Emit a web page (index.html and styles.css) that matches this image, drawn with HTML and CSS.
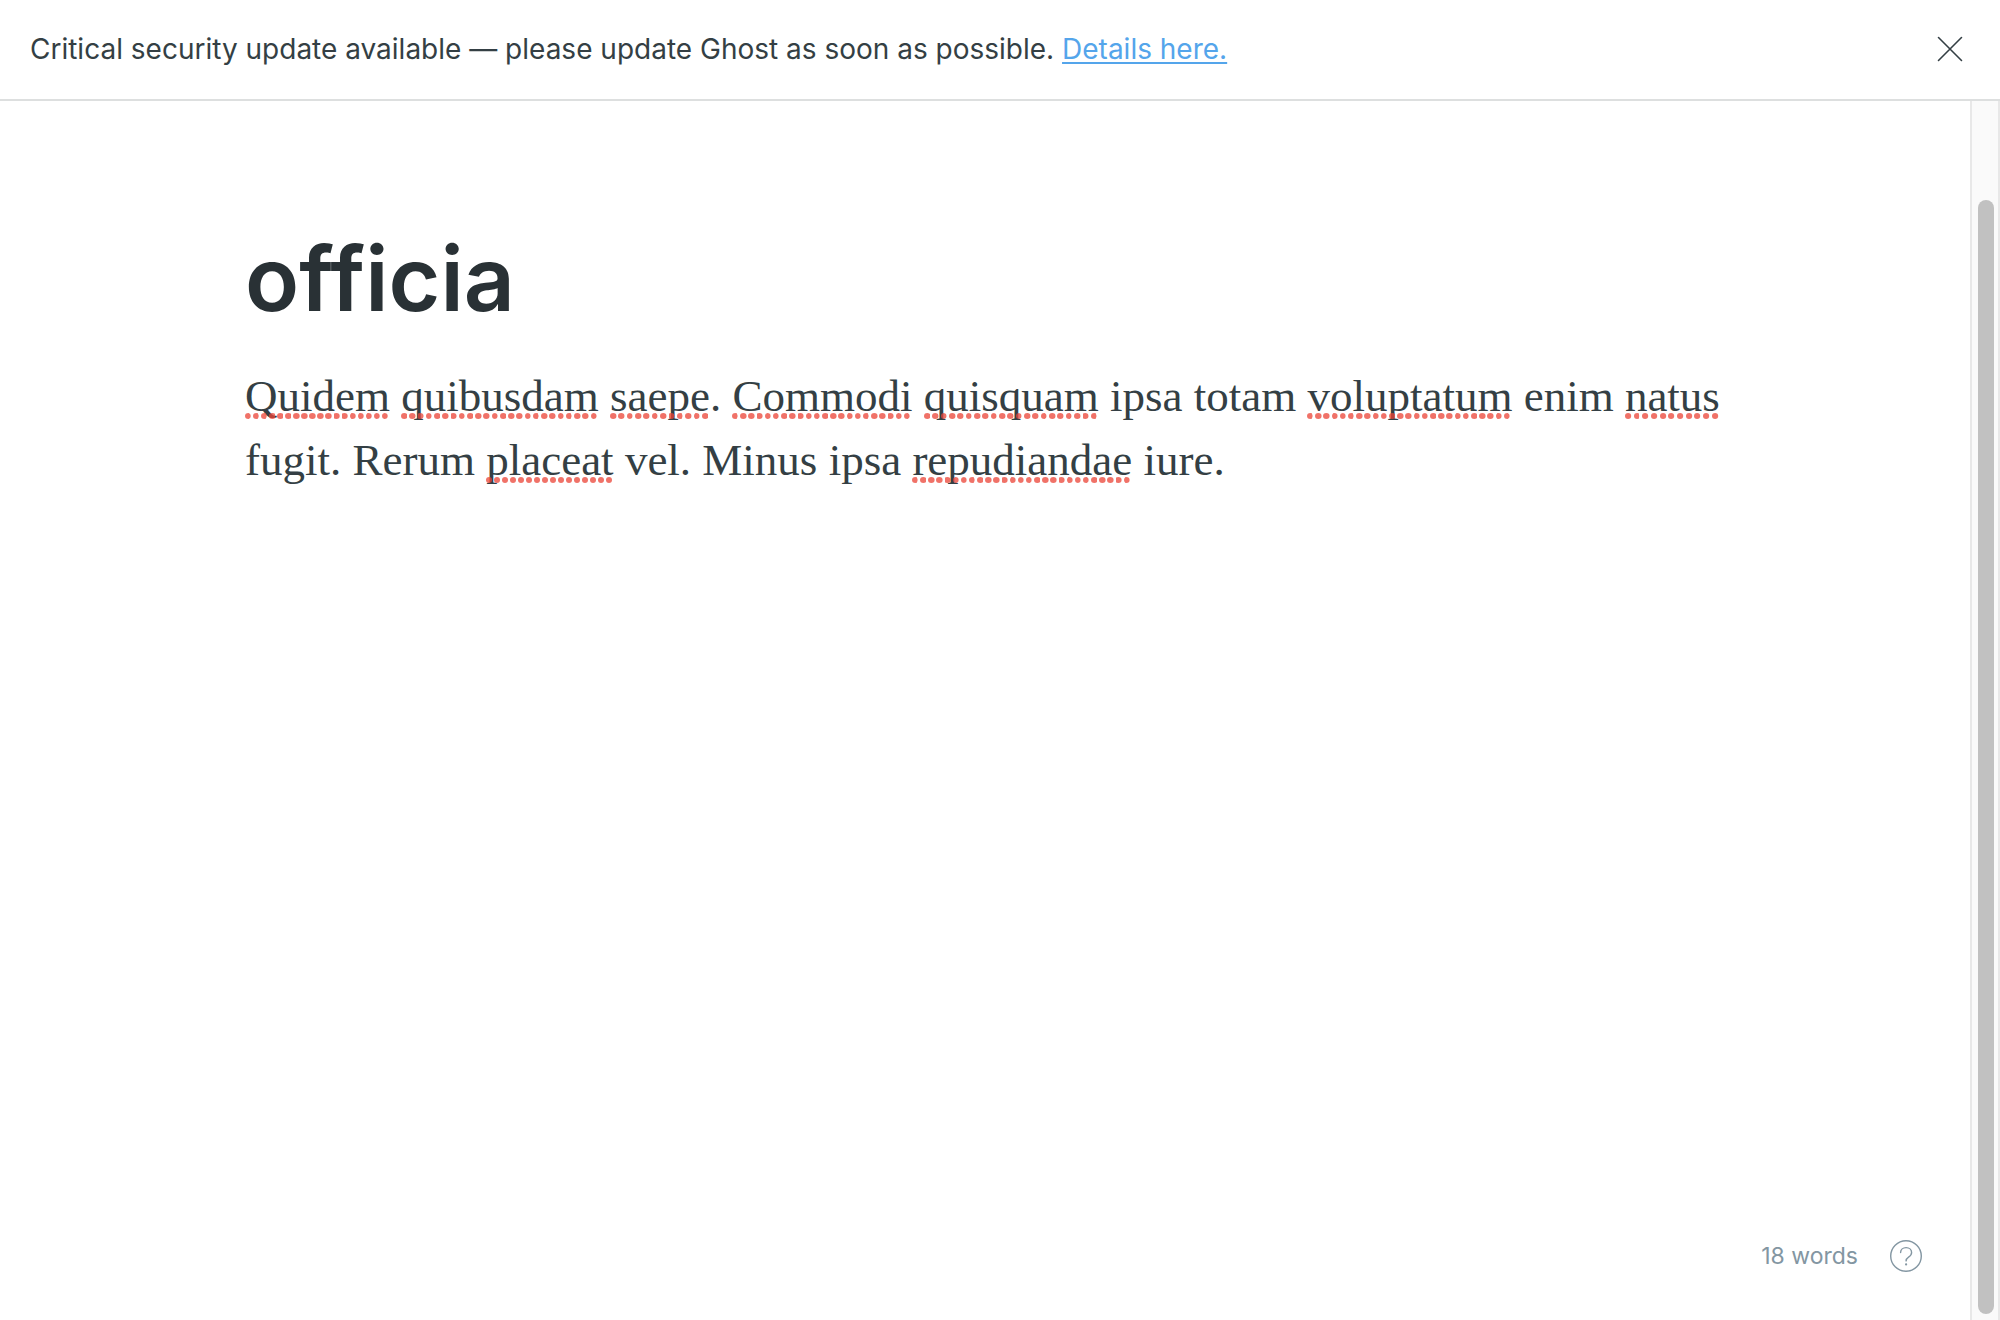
FILE: index.html
```html
<!DOCTYPE html>
<html lang="en">
<head>
<meta charset="utf-8">
<title>Ghost editor</title>
<link rel="stylesheet" href="styles.css">
</head>
<body>
<header class="alert">
  <p class="alert-text">Critical security update available — please update Ghost as soon as possible. <a class="alert-link" href="#details">Details here.</a></p>
  <button class="icon-button" type="button" aria-label="Close">
    <svg width="26" height="26" viewBox="0 0 26 26" fill="none" stroke="currentColor" stroke-width="1.6" stroke-linecap="round"><path d="M1.5 1.5l23 23M24.5 1.5l-23 23"/></svg>
  </button>
</header>
<div class="workspace">
  <main class="editor">
    <div class="content">
      <input class="title" type="text" value="officia" aria-label="Post title" spellcheck="false">
      <div class="body" role="textbox" aria-multiline="true" aria-label="Post content" contenteditable="true" spellcheck="false"><p class="paragraph"><span class="misspelled">Quidem</span> <span class="misspelled">quibusdam</span> <span class="misspelled">saepe</span>. <span class="misspelled">Commodi</span> <span class="misspelled">quisquam</span> ipsa totam <span class="misspelled">voluptatum</span> enim <span class="misspelled">natus</span> fugit. Rerum <span class="misspelled">placeat</span> vel. Minus ipsa <span class="misspelled">repudiandae</span> iure.</p></div>
    </div>
    <footer class="status">
      <span class="word-count">18 words</span>
      <button class="icon-button" type="button" aria-label="Help">
        <svg width="32" height="32" viewBox="0 0 32 32" fill="none" stroke="currentColor" stroke-width="1.4" stroke-linecap="round"><circle cx="16" cy="16" r="15.3"/><path d="M10.6 12.6c0-3 2.4-5 5.5-5s5.500 2 5.500 5c0 2.400-1.400 3.600-3 4.600-1.500 1-2.500 1.900-2.500 3.700"/><circle cx="16.1" cy="24.4" r="1.1" fill="currentColor" stroke="none"/></svg>
      </button>
    </footer>
  </main>
  <div class="scroll-track"><div class="scroll-thumb"></div></div>
</div>
</body>
</html>
```
FILE: styles.css
```css
* {
  box-sizing: border-box;
}

body {
  display: flex;
  flex-direction: column;
  min-height: 100vh;
  margin: 0;
  background: #fff;
  color: #343f44;
  font-family: Inter, "Liberation Sans", sans-serif;
}

.alert {
  display: flex;
  align-items: center;
  justify-content: space-between;
  padding: 31px 37px 32px 30px;
  border-bottom: 2px solid #dddfdf;
}

.alert-text {
  margin: 0;
  font-size: 28px;
  line-height: 36px;
}

.alert-link {
  color: #54a5eb;
  text-decoration-thickness: 2px;
  text-underline-offset: 3px;
  text-decoration-skip-ink: none;
}

.icon-button {
  display: flex;
  padding: 0;
  border: 0;
  background: none;
  color: inherit;
  cursor: pointer;
}

.workspace {
  display: flex;
  flex: 1;
}

.editor {
  display: flex;
  flex: 1;
  flex-direction: column;
  justify-content: space-between;
}

.content {
  width: 100%;
  max-width: 1480px;
  margin: 0 auto;
  padding-top: 120px;
}

.title {
  display: block;
  width: 100%;
  height: 116px;
  margin: 0 0 27px;
  padding: 0;
  border: 0;
  outline: 0;
  background: none;
  color: #293135;
  font: 600 89px/116px Inter, "Liberation Sans", sans-serif;
}

.body {
  outline: 0;
}

.paragraph {
  margin: 0;
  font-family: Georgia, "Liberation Serif", serif;
  font-size: 45px;
  line-height: 64px;
}

.misspelled {
  position: relative;
}

.misspelled::after {
  position: absolute;
  right: 0;
  bottom: 2px;
  left: 0;
  height: 6px;
  background: url("data:image/svg+xml,%3Csvg xmlns='http://www.w3.org/2000/svg' width='8' height='6'%3E%3Ccircle cx='3' cy='3' r='3' fill='%23ea4335' fill-opacity='.75'/%3E%3C/svg%3E") 0 0 / 8px 6px space no-repeat;
  background-repeat: space no-repeat;
  content: "";
}

.status {
  display: flex;
  align-items: center;
  justify-content: flex-end;
  gap: 32px;
  padding: 0 48px 48px;
  color: #8396a2;
}

.word-count {
  font-size: 23px;
  line-height: 32px;
}

.scroll-track {
  display: flex;
  width: 30px;
  padding: 99px 4px 6px 6px;
  border: solid #e8e8e8;
  border-width: 0 2px;
  background: #fafafa;
}

.scroll-thumb {
  flex: 1;
  border-radius: 8px;
  background: #c1c1c1;
}
```
